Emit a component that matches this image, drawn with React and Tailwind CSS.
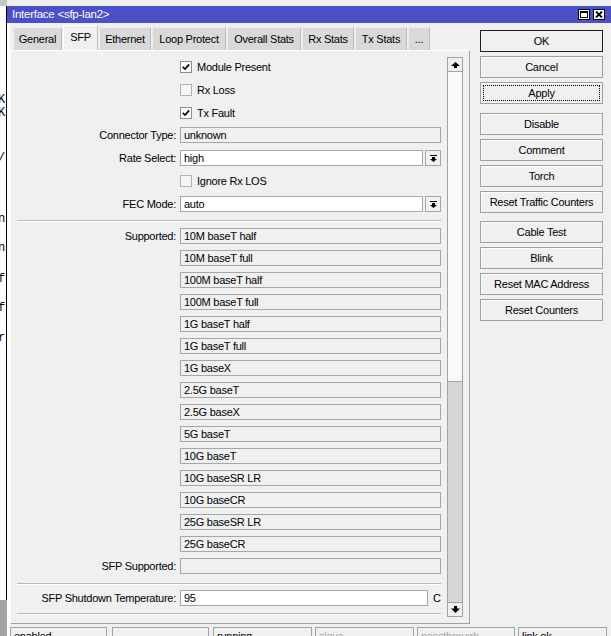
import React from "react";

const SUPPORTED = [
  "10M baseT half",
  "10M baseT full",
  "100M baseT half",
  "100M baseT full",
  "1G baseT half",
  "1G baseT full",
  "1G baseX",
  "2.5G baseT",
  "2.5G baseX",
  "5G baseT",
  "10G baseT",
  "10G baseSR LR",
  "10G baseCR",
  "25G baseSR LR",
  "25G baseCR",
];

const TABS = [
  { name: "General", w: "w-[49px]" },
  { name: "SFP", w: "w-[35px]", active: true },
  { name: "Ethernet", w: "w-[52px]" },
  { name: "Loop Protect", w: "w-[74px]" },
  { name: "Overall Stats", w: "w-[74px]" },
  { name: "Rx Stats", w: "w-[52px]" },
  { name: "Tx Stats", w: "w-[52px]" },
  { name: "...", w: "w-[22px]" },
];

function CheckBox({ checked }) {
  return (
    <span
      className={`w-[12px] h-[12px] border flex items-center justify-center shrink-0 ${
        checked ? "bg-white border-[#8e8e8e]" : "bg-[#f5f5f5] border-[#b4b4b4]"
      }`}
    >
      {checked && (
        <svg width="8" height="8" viewBox="0 0 8 8">
          <path d="M0.8 3.8 L3 6 L7.2 1.4" fill="none" stroke="#000" strokeWidth="1.7" />
        </svg>
      )}
    </span>
  );
}

function CheckRow({ label, checked, extra = "" }) {
  return (
    <div className={`h-[22px] flex items-center ${extra}`}>
      <div className="w-[163px]" />
      <CheckBox checked={checked} />
      <span className="ml-[5px]">{label}</span>
    </div>
  );
}

function Row({ label, children, extra = "" }) {
  return (
    <div className={`h-[22px] flex items-center ${extra}`}>
      <div className="w-[159px] text-right whitespace-nowrap">{label}</div>
      <div className="ml-[4px] w-[261px] flex items-center">{children}</div>
    </div>
  );
}

function ReadField({ value }) {
  return (
    <div className="h-[16px] w-full border border-[#a6a6a6] bg-[#f0f0f0] pl-[3px] leading-[14px] whitespace-nowrap">
      {value}
    </div>
  );
}

function WhiteField({ value, w }) {
  return (
    <div className={`h-[16px] ${w} border border-[#a6a6a6] bg-white pl-[3px] leading-[14px] whitespace-nowrap`}>
      {value}
    </div>
  );
}

function DropButton() {
  return (
    <div className="ml-[2px] w-[16px] h-[16px] border border-[#a6a6a6] bg-[#f0f0f0] flex items-center justify-center">
      <svg width="7" height="7" viewBox="0 0 7 7">
        <rect x="0" y="0" width="7" height="1" fill="#000" />
        <polygon points="2,2 5,2 5,4 7,4 3.5,7 0,4 2,4" fill="#000" />
      </svg>
    </div>
  );
}

function Separator({ extra = "" }) {
  return <div className={`h-[2px] border-t border-[#b9b9b9] border-b border-b-white ${extra}`} />;
}

function ScrollBar() {
  return (
    <div className="mt-[6px] ml-[6px] w-[16px] h-[560px] flex flex-col">
      <div className="h-[15px] border border-[#a3a3a3] bg-[#f0f0f0] flex items-center justify-center">
        <svg width="9" height="6" viewBox="0 0 9 6">
          <polygon points="4.5,0 9,4 6,4 6,6 3,6 3,4 0,4" fill="#000" />
        </svg>
      </div>
      <div className="h-[310px] border-x border-b border-[#a3a3a3] bg-[#f9f9f9]" />
      <div className="flex-1 border-x border-[#a3a3a3] bg-[#d6d6d6]" />
      <div className="h-[15px] border border-[#a3a3a3] bg-[#f0f0f0] flex items-center justify-center">
        <svg width="9" height="7" viewBox="0 0 9 7">
          <polygon points="3,0 6,0 6,2.5 9,2.5 4.5,7 0,2.5 3,2.5" fill="#000" />
        </svg>
      </div>
    </div>
  );
}

function SideButton({ label, kind = "", extra = "" }) {
  const border =
    kind === "default" ? "border-[#1e1e1e]" : "border-[#a0a0a0] shadow-[inset_1px_1px_0_#fdfdfd]";
  const focus = kind === "focus" ? "outline-1 outline-dotted outline-black outline-offset-[-4px]" : "";
  return (
    <div
      className={`h-[22px] w-[123px] flex items-center justify-center bg-[#f0f0f0] border ${border} ${focus} ${extra}`}
    >
      {label}
    </div>
  );
}

function StatusBox({ label, w, extra = "", muted }) {
  return (
    <div
      className={`${w} h-[20px] shrink-0 border border-[#a3a3a3] bg-[#f0f0f0] pl-[3px] pt-[2px] leading-[13px] whitespace-nowrap ${
        muted ? "text-[#a8a8a8]" : "text-black"
      } ${extra}`}
    >
      {label}
    </div>
  );
}

function TitleBar() {
  return (
    <div className="h-[17px] shrink-0 bg-[#4b50c7] flex items-start text-white">
      <div className="pl-[5px] pt-[1px] text-[11.5px] leading-[15px] flex-1">Interface &lt;sfp-lan2&gt;</div>
      <div className="pt-[3px] pr-[6px] flex gap-[3px]">
        <div className="w-[12px] h-[11px] bg-white border border-black flex items-center justify-center">
          <svg width="8" height="7" viewBox="0 0 8 7">
            <rect x="0.5" y="0.5" width="7" height="6" fill="none" stroke="#000" strokeWidth="1" />
            <rect x="0" y="0" width="8" height="2" fill="#000" />
          </svg>
        </div>
        <div className="w-[12px] h-[11px] bg-white border border-black flex items-center justify-center">
          <svg width="8" height="7" viewBox="0 0 8 7">
            <path d="M1 0.5 L7 6.5 M7 0.5 L1 6.5" stroke="#000" strokeWidth="1.8" />
          </svg>
        </div>
      </div>
    </div>
  );
}

// Clipped edge of the terminal window sitting behind the dialog
function BackEdge() {
  const glyphs = [
    { c: "K", mt: "mt-[88px]" },
    { c: "K", mt: "mt-0" },
    { c: "/", mt: "mt-[32px]" },
    { c: "n", mt: "mt-[48px]" },
    { c: "n", mt: "mt-[16px]" },
    { c: "f", mt: "mt-[18px]" },
    { c: "f", mt: "mt-[16px]" },
    { c: "r", mt: "mt-[17px]" },
  ];
  return (
    <div className="w-[7px] shrink-0 flex flex-col">
      <div className="flex-1 flex">
        <div className="w-[6px] bg-white overflow-hidden font-['Liberation_Mono',monospace] text-[12px] text-black">
          {glyphs.map((g, i) => (
            <div key={i} className={`h-[13px] leading-[13px] -ml-[2px] ${g.mt}`}>
              {g.c}
            </div>
          ))}
        </div>
        <div className="w-[1px] bg-black" />
      </div>
      <div className="h-[36px] bg-[#a4a4a4]" />
    </div>
  );
}

export default function App() {
  return (
    <div className="w-[611px] h-[636px] overflow-hidden flex flex-col bg-[#f0f0f0] font-['Liberation_Sans',Arial,sans-serif] text-[11px] tracking-[-0.25px] text-black">
      <div className="h-[6px] shrink-0 flex">
        <div className="w-[7px] bg-[#c6c6c6]" />
        <div className="flex-1 bg-[#f0f0f0]" />
      </div>
      <div className="flex-1 flex min-h-0">
        <BackEdge />
        <div className="flex-1 flex flex-col min-w-0">
          <TitleBar />
          <div className="flex-1 flex flex-col border-l-[3px] border-white bg-[#f0f0f0]">
            <div className="flex">
              <div className="w-[460px] flex flex-col">
                {/* tab strip */}
                <div className="h-[27px] flex items-end pl-[3px] gap-px">
                  {TABS.map((t) =>
                    t.active ? (
                      <div
                        key={t.name}
                        className={`${t.w} h-[25px] bg-[#f0f0f0] border-l border-t border-white border-r border-r-[#bdbdbd] flex justify-center pt-[5px] leading-[13px]`}
                      >
                        {t.name}
                      </div>
                    ) : (
                      <div
                        key={t.name}
                        className={`${t.w} h-[23px] bg-[#d9d9d9] border-l border-t border-[#ececec] border-r border-r-[#bcbcbc] flex justify-center pt-[5px] leading-[13px] whitespace-nowrap`}
                      >
                        {t.name}
                      </div>
                    )
                  )}
                </div>
                {/* tab page */}
                <div className="h-[574px] border-t border-l border-white border-r border-b border-r-[#a3a3a3] border-b-[#a3a3a3] flex items-start">
                  <div className="ml-[6px] w-[424px] pt-[5px] flex flex-col">
                    <CheckRow label="Module Present" checked extra="mb-px" />
                    <CheckRow label="Rx Loss" extra="mb-px" />
                    <CheckRow label="Tx Fault" checked />
                    <Row label="Connector Type:" extra="mb-px">
                      <ReadField value="unknown" />
                    </Row>
                    <Row label="Rate Select:" extra="mb-px">
                      <WhiteField value="high" w="w-[243px]" />
                      <DropButton />
                    </Row>
                    <CheckRow label="Ignore Rx LOS" extra="mb-px" />
                    <Row label="FEC Mode:">
                      <WhiteField value="auto" w="w-[243px]" />
                      <DropButton />
                    </Row>
                    <Separator extra="mt-[5px]" />
                    <div className="mt-[3px] flex flex-col">
                      {SUPPORTED.map((s, i) => (
                        <Row key={s} label={i === 0 ? "Supported:" : ""}>
                          <ReadField value={s} />
                        </Row>
                      ))}
                      <Row label="SFP Supported:">
                        <ReadField value="" />
                      </Row>
                    </div>
                    <Separator extra="mt-[6px]" />
                    <Row label="SFP Shutdown Temperature:" extra="mt-[2px]">
                      <WhiteField value="95" w="w-[248px]" />
                      <span className="ml-[5px]">C</span>
                    </Row>
                    <Separator extra="mt-[4px]" />
                  </div>
                  <ScrollBar />
                </div>
              </div>
              {/* command buttons */}
              <div className="ml-[10px] w-[123px] pt-[7px] flex flex-col">
                <SideButton label="OK" kind="default" />
                <SideButton label="Cancel" extra="mt-[4px]" />
                <SideButton label="Apply" kind="focus" extra="mt-[4px]" />
                <SideButton label="Disable" extra="mt-[9px]" />
                <SideButton label="Comment" extra="mt-[4px]" />
                <SideButton label="Torch" extra="mt-[4px]" />
                <SideButton label="Reset Traffic Counters" extra="mt-[4px]" />
                <SideButton label="Cable Test" extra="mt-[8px]" />
                <SideButton label="Blink" extra="mt-[4px]" />
                <SideButton label="Reset MAC Address" extra="mt-[4px]" />
                <SideButton label="Reset Counters" extra="mt-[4px]" />
              </div>
            </div>
            {/* status bar */}
            <div className="mt-[3px] flex">
              <StatusBox label="enabled" w="w-[97px]" />
              <StatusBox label="" w="w-[97px]" extra="ml-[5px]" />
              <StatusBox label="running" w="w-[99px]" extra="ml-[4px]" />
              <StatusBox label="slave" w="w-[99px]" extra="ml-[3px]" muted />
              <StatusBox label="passthrough" w="w-[98px]" extra="ml-[3px]" muted />
              <StatusBox label="link ok" w="w-[89px]" extra="ml-[3px]" />
            </div>
          </div>
        </div>
      </div>
    </div>
  );
}
